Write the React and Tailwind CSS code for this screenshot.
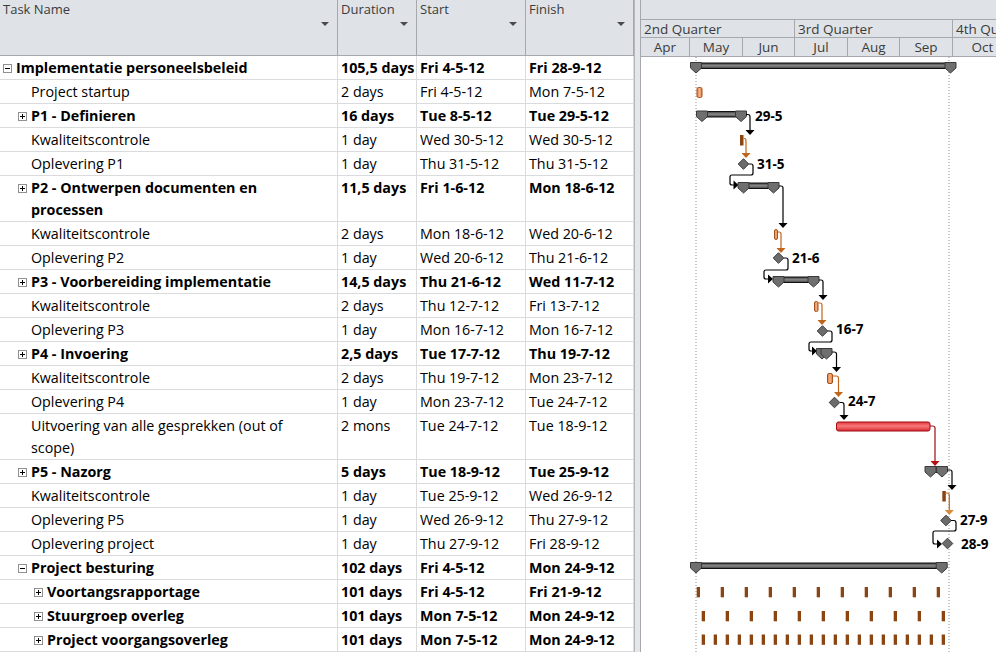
import React from "react";

const ROWS = [
  { name: ["Implementatie personeelsbeleid"], lvl: 0, bold: true, box: "-", dur: "105,5 days", start: "Fri 4-5-12", finish: "Fri 28-9-12" },
  { name: ["Project startup"], lvl: 1, dur: "2 days", start: "Fri 4-5-12", finish: "Mon 7-5-12" },
  { name: ["P1 - Definieren"], lvl: 1, bold: true, box: "+", dur: "16 days", start: "Tue 8-5-12", finish: "Tue 29-5-12" },
  { name: ["Kwaliteitscontrole"], lvl: 1, dur: "1 day", start: "Wed 30-5-12", finish: "Wed 30-5-12" },
  { name: ["Oplevering P1"], lvl: 1, dur: "1 day", start: "Thu 31-5-12", finish: "Thu 31-5-12" },
  { name: ["P2 - Ontwerpen documenten en", "processen"], lvl: 1, bold: true, box: "+", dur: "11,5 days", start: "Fri 1-6-12", finish: "Mon 18-6-12", tall: true },
  { name: ["Kwaliteitscontrole"], lvl: 1, dur: "2 days", start: "Mon 18-6-12", finish: "Wed 20-6-12" },
  { name: ["Oplevering P2"], lvl: 1, dur: "1 day", start: "Wed 20-6-12", finish: "Thu 21-6-12" },
  { name: ["P3 - Voorbereiding implementatie"], lvl: 1, bold: true, box: "+", dur: "14,5 days", start: "Thu 21-6-12", finish: "Wed 11-7-12" },
  { name: ["Kwaliteitscontrole"], lvl: 1, dur: "2 days", start: "Thu 12-7-12", finish: "Fri 13-7-12" },
  { name: ["Oplevering P3"], lvl: 1, dur: "1 day", start: "Mon 16-7-12", finish: "Mon 16-7-12" },
  { name: ["P4 - Invoering"], lvl: 1, bold: true, box: "+", dur: "2,5 days", start: "Tue 17-7-12", finish: "Thu 19-7-12" },
  { name: ["Kwaliteitscontrole"], lvl: 1, dur: "2 days", start: "Thu 19-7-12", finish: "Mon 23-7-12" },
  { name: ["Oplevering P4"], lvl: 1, dur: "1 day", start: "Mon 23-7-12", finish: "Tue 24-7-12" },
  { name: ["Uitvoering van alle gesprekken (out of", "scope)"], lvl: 1, dur: "2 mons", start: "Tue 24-7-12", finish: "Tue 18-9-12", tall: true },
  { name: ["P5 - Nazorg"], lvl: 1, bold: true, box: "+", dur: "5 days", start: "Tue 18-9-12", finish: "Tue 25-9-12" },
  { name: ["Kwaliteitscontrole"], lvl: 1, dur: "1 day", start: "Tue 25-9-12", finish: "Wed 26-9-12" },
  { name: ["Oplevering P5"], lvl: 1, dur: "1 day", start: "Wed 26-9-12", finish: "Thu 27-9-12" },
  { name: ["Oplevering project"], lvl: 1, dur: "1 day", start: "Thu 27-9-12", finish: "Fri 28-9-12" },
  { name: ["Project besturing"], lvl: 1, bold: true, box: "-", dur: "102 days", start: "Fri 4-5-12", finish: "Mon 24-9-12" },
  { name: ["Voortangsrapportage"], lvl: 2, bold: true, box: "+", dur: "101 days", start: "Fri 4-5-12", finish: "Fri 21-9-12" },
  { name: ["Stuurgroep overleg"], lvl: 2, bold: true, box: "+", dur: "101 days", start: "Mon 7-5-12", finish: "Mon 24-9-12" },
  { name: ["Project voorgangsoverleg"], lvl: 2, bold: true, box: "+", dur: "101 days", start: "Mon 7-5-12", finish: "Mon 24-9-12" },
];

const INDENT = ["w-[3px]", "w-[18px]", "w-[34px]"];

function OutlineBox({ kind }) {
  return (
    <svg width="9" height="9" viewBox="0 0 9 9" className="mt-[7px]">
      <rect x="0.5" y="0.5" width="8" height="8" fill="#fff" stroke="#919191" />
      <line x1="2" y1="4.5" x2="7" y2="4.5" stroke="#000" />
      {kind === "+" && <line x1="4.5" y1="2" x2="4.5" y2="7" stroke="#000" />}
    </svg>
  );
}

function HeaderCell({ label, w }) {
  return (
    <div className={`${w} shrink-0 h-full border-r border-[#a5a8ad] flex flex-col pl-[3px] pr-[8px]`}>
      <span className="text-[13px] leading-[18px] text-[#3b3b3b]">{label}</span>
      <div className="flex justify-end mt-[4px]">
        <div className="w-0 h-0 border-l-[4px] border-r-[4px] border-t-[4px] border-l-transparent border-r-transparent border-t-[#4a4a4a]" />
      </div>
    </div>
  );
}

function TaskTable() {
  return (
    <div className="w-[634px] shrink-0 flex flex-col">
      <div className="h-[57px] flex bg-[#dfe3e8] border-b border-[#a5a8ad]">
        <HeaderCell label="Task Name" w="w-[338px]" />
        <HeaderCell label="Duration" w="w-[79px]" />
        <HeaderCell label="Start" w="w-[109px]" />
        <HeaderCell label="Finish" w="w-[108px]" />
      </div>
      {ROWS.map((r, i) => {
        const txt = r.bold ? "font-bold" : "font-normal";
        return (
          <div key={i} className={`${r.tall ? "h-[46px]" : "h-[24px]"} shrink-0 flex border-b border-[#dadbdc] text-[14.3px] leading-[22px] text-black`}>
            <div className="w-[338px] shrink-0 flex border-r border-[#dadbdc]">
              <div className={`${INDENT[r.lvl]} shrink-0`} />
              <div className="w-[13px] shrink-0 pt-[1px]">{r.box && <OutlineBox kind={r.box} />}</div>
              <div className={`${txt} whitespace-nowrap pt-[1px]`}>
                {r.name.map((n, k) => (
                  <div key={k}>{n}</div>
                ))}
              </div>
            </div>
            <div className={`w-[79px] shrink-0 border-r border-[#dadbdc] pl-[3px] pt-[1px] whitespace-nowrap overflow-hidden ${txt}`}>{r.dur}</div>
            <div className={`w-[109px] shrink-0 border-r border-[#dadbdc] pl-[3px] pt-[1px] whitespace-nowrap ${txt}`}>{r.start}</div>
            <div className={`w-[108px] shrink-0 border-r border-[#dadbdc] pl-[3px] pt-[1px] whitespace-nowrap ${txt}`}>{r.finish}</div>
          </div>
        );
      })}
    </div>
  );
}

function Summary({ x1, x2, y }) {
  const cap = (cx) => `M${cx - 5.5} ${y - 0.5} L${cx + 5.5} ${y - 0.5} L${cx + 5.5} ${y + 5} L${cx} ${y + 10} L${cx - 5.5} ${y + 5} Z`;
  return (
    <g>
      <rect x={x1} y={y} width={x2 - x1} height={5.5} fill="url(#sumg)" stroke="#111" strokeWidth="1" />
      <path d={cap(x1)} fill="#6f6f6f" stroke="#3a3a3a" strokeWidth="1" />
      <path d={cap(x2)} fill="#6f6f6f" stroke="#3a3a3a" strokeWidth="1" />
    </g>
  );
}

function Bar({ x1, x2, y, dark }) {
  if (dark) return <rect x={x1} y={y} width={x2 - x1} height={10.5} fill="#8b4513" />;
  return <rect x={x1 + 0.5} y={y + 0.5} width={x2 - x1 - 1} height={10} rx="1.5" fill="url(#orgg)" stroke="#a4531c" strokeWidth="1" />;
}

function Diamond({ cx, cy }) {
  return <path d={`M${cx} ${cy - 5.3} L${cx + 5.3} ${cy} L${cx} ${cy + 5.3} L${cx - 5.3} ${cy} Z`} fill="#6b6b6b" stroke="#3c3c3c" strokeWidth="1" />;
}

function Down({ x, tip, color = "#000" }) {
  return <path d={`M${x - 4.5} ${tip - 5} L${x + 4.5} ${tip - 5} L${x} ${tip} Z`} fill={color} />;
}

function Right({ tip, y, color = "#000" }) {
  return <path d={`M${tip - 5} ${y - 4.5} L${tip - 5} ${y + 4.5} L${tip} ${y} Z`} fill={color} />;
}

function Line({ d, color = "#000" }) {
  return <path d={d} fill="none" stroke={color} strokeWidth="1.2" strokeLinejoin="round" />;
}

function Label({ x, y, children }) {
  return (
    <text x={x} y={y} fontSize="13.5" fontWeight="700" fill="#000" fontFamily="'Open Sans', sans-serif">
      {children}
    </text>
  );
}

function Chart() {
  const BR = "#8b4513";
  const OR = "#c0661c";
  const tickA = Array.from({ length: 11 }, (_, k) => 696.7 + 24 * k);
  const tickB = Array.from({ length: 11 }, (_, k) => 701.7 + 24 * k);
  const tickC = Array.from({ length: 21 }, (_, k) => 701.7 + 12 * k);
  return (
    <svg width="355" height="595" viewBox="641 57 355 595" className="block">
      <defs>
        <linearGradient id="sumg" x1="0" y1="0" x2="0" y2="1">
          <stop offset="0" stopColor="#3d3d3d" />
          <stop offset="0.5" stopColor="#8a8a8a" />
          <stop offset="1" stopColor="#3d3d3d" />
        </linearGradient>
        <linearGradient id="orgg" x1="0" y1="0" x2="1" y2="0">
          <stop offset="0" stopColor="#d97a3a" />
          <stop offset="0.5" stopColor="#f7b48a" />
          <stop offset="1" stopColor="#d97a3a" />
        </linearGradient>
        <linearGradient id="redg" x1="0" y1="0" x2="0" y2="1">
          <stop offset="0" stopColor="#e0353a" />
          <stop offset="0.45" stopColor="#f9787a" />
          <stop offset="1" stopColor="#d42a30" />
        </linearGradient>
      </defs>
      <line x1="696" y1="57" x2="696" y2="652" stroke="#8d8d8d" strokeDasharray="1 2" />
      <line x1="949" y1="57" x2="949" y2="652" stroke="#8d8d8d" strokeDasharray="1 2" />

      {/* row 0 */}
      <Summary x1={696} x2={950.5} y={63} />
      {/* project startup */}
      <Bar x1={696.5} x2={702.5} y={87} />
      {/* P1 */}
      <Summary x1={702} x2={741} y={111.5} />
      <Label x={755} y={121}>29-5</Label>
      <Line d="M746 114.5 L748 114.5 Q750 114.5 750 117 L750 131" />
      <Down x={750} tip={135} />
      <Bar x1={740} x2={743.5} y={135} dark />
      <Line color={OR} d="M743.5 138.5 L744.5 138.5 Q746 138.5 746 141 L746 154" />
      <Down x={746} tip={158} color={OR} />
      <Diamond cx={743.5} cy={164} />
      <Label x={757} y={168.5}>31-5</Label>
      <Line d="M749 164 L751 164 Q753 164 753 166 L753 173 Q753 175 751 175 L732 175 Q730 175 730 177 L730 183 Q730 185 732 185 L734 185" />
      <Right tip={738.5} y={185} />
      {/* P2 */}
      <Summary x1={743.5} x2={773.5} y={183} />
      <Line d="M779 186 L781 186 Q783 186 783 188 L783 224" />
      <Down x={783} tip={228} />
      <Bar x1={774} x2={778} y={229} />
      <Line color={OR} d="M778 232 L779 232 Q781 232 781 234 L781 249" />
      <Down x={781} tip={253} color={OR} />
      <Diamond cx={778.5} cy={258} />
      <Label x={792} y={262.5}>21-6</Label>
      <Line d="M784 258 L786 258 Q788 258 788 260 L788 268 Q788 270 786 270 L766 270 Q764 270 764 272 L764 277 Q764 279 766 279 L768 279" />
      <Right tip={773} y={279} />
      {/* P3 */}
      <Summary x1={778.5} x2={813.5} y={277} />
      <Line d="M819 280 L821 280 Q823 280 823 282 L823 296" />
      <Down x={823} tip={300} />
      <Bar x1={814} x2={818.5} y={301} />
      <Line color={OR} d="M818.5 303 L820 303 Q822 303 822 305 L822 321" />
      <Down x={822} tip={325} color={OR} />
      <Diamond cx={822.5} cy={331} />
      <Label x={836} y={333.5}>16-7</Label>
      <Line d="M828 331 L830 331 Q832 331 832 333 L832 340 Q832 342 830 342 L811 342 Q809 342 809 344 L809 349 Q809 351 811 351 L812 351" />
      <Right tip={817} y={351} />
      {/* P4 */}
      <Summary x1={822} x2={826.5} y={349} />
      <Line d="M832 352 L834 352 Q836.5 352 836.5 354 L836.5 368" />
      <Down x={836.5} tip={372} />
      <Bar x1={827} x2={833} y={373} />
      <Line color={OR} d="M833 376 L836 376 Q838.5 376 838.5 378 L838.5 393" />
      <Down x={838.5} tip={397} color={OR} />
      <Diamond cx={834.5} cy={402.5} />
      <Label x={848} y={405.5}>24-7</Label>
      <Line d="M840 402.5 L842 402.5 Q844 402.5 844 405 L844 416" />
      <Down x={844} tip={420} />
      {/* Uitvoering */}
      <rect x={836.5} y={422} width={93.5} height={9} rx="2" fill="url(#redg)" stroke="#a30d12" strokeWidth="1" />
      <Line color="#9b0f12" d="M930 426 L932.5 426 Q935 426 935 428 L935 462" />
      <Down x={935} tip={466} color="#b80d12" />
      {/* P5 */}
      <Summary x1={930.5} x2={942} y={467} />
      <Line d="M947.5 470 L950 470 Q952 470 952 472 L952 486" />
      <Down x={952} tip={490} />
      <Bar x1={942.3} x2={945.8} y={491} dark />
      <Line color={OR} d="M945.8 493 L947 493 Q949.3 493 949.3 495 L949.3 511" />
      <Down x={949.3} tip={515} color="#d98a3a" />
      <Diamond cx={946} cy={520.5} />
      <Label x={960} y={524.5}>27-9</Label>
      <Line d="M951 520.5 L954 520.5 Q956 520.5 956 523 L956 529 Q956 531 954 531 L935 531 Q933 531 933 533 L933 542 Q933 544 935 544 L937 544" />
      <Right tip={942} y={544} />
      <Diamond cx={947.5} cy={543.5} />
      <Label x={961} y={548.5}>28-9</Label>
      {/* Project besturing */}
      <Summary x1={696} x2={941.7} y={563} />
      {tickA.map((x) => (
        <rect key={"a" + x} x={x} y={587} width={3.3} height={10.3} fill={BR} />
      ))}
      {tickB.map((x) => (
        <rect key={"b" + x} x={x} y={611} width={3.3} height={10.3} fill={BR} />
      ))}
      {tickC.map((x) => (
        <rect key={"c" + x} x={x} y={634.5} width={3.3} height={10.3} fill={BR} />
      ))}
    </svg>
  );
}

const QUARTERS = [
  { label: "2nd Quarter", w: "w-[154px]" },
  { label: "3rd Quarter", w: "w-[158px]" },
  { label: "4th Quarter", w: "w-[80px]" },
];
const MONTHS = [
  { label: "Apr", w: "w-[49px]" },
  { label: "May", w: "w-[53px]" },
  { label: "Jun", w: "w-[52px]" },
  { label: "Jul", w: "w-[53px]" },
  { label: "Aug", w: "w-[52px]" },
  { label: "Sep", w: "w-[53px]" },
  { label: "Oct", w: "w-[60px]" },
];

function ChartPane() {
  return (
    <div className="flex-1 min-w-0 flex flex-col border-l border-[#a5a8ad] overflow-hidden">
      <div className="h-[57px] shrink-0 flex flex-col bg-[#dfe3e8] border-b border-[#a5a8ad] text-[13.5px] text-[#3b3b3b] leading-[18px]">
        <div className="h-[20px] shrink-0 border-b border-[#a5a8ad]" />
        <div className="h-[18px] shrink-0 flex border-b border-[#a5a8ad]">
          {QUARTERS.map((q) => (
            <div key={q.label} className={`${q.w} shrink-0 border-r border-[#a5a8ad] pl-[3px] whitespace-nowrap overflow-hidden`}>
              {q.label}
            </div>
          ))}
        </div>
        <div className="h-[18px] shrink-0 flex">
          {MONTHS.map((m) => (
            <div key={m.label} className={`${m.w} shrink-0 border-r border-[#a5a8ad] text-center whitespace-nowrap`}>
              {m.label}
            </div>
          ))}
        </div>
      </div>
      <Chart />
    </div>
  );
}

export default function App() {
  return (
    <div className="w-[996px] h-[652px] overflow-hidden flex bg-white font-['Open_Sans',sans-serif]">
      <TaskTable />
      <div className="w-[6px] shrink-0 bg-[#e4e6e9] border-l border-[#b4b7bb]" />
      <ChartPane />
    </div>
  );
}
